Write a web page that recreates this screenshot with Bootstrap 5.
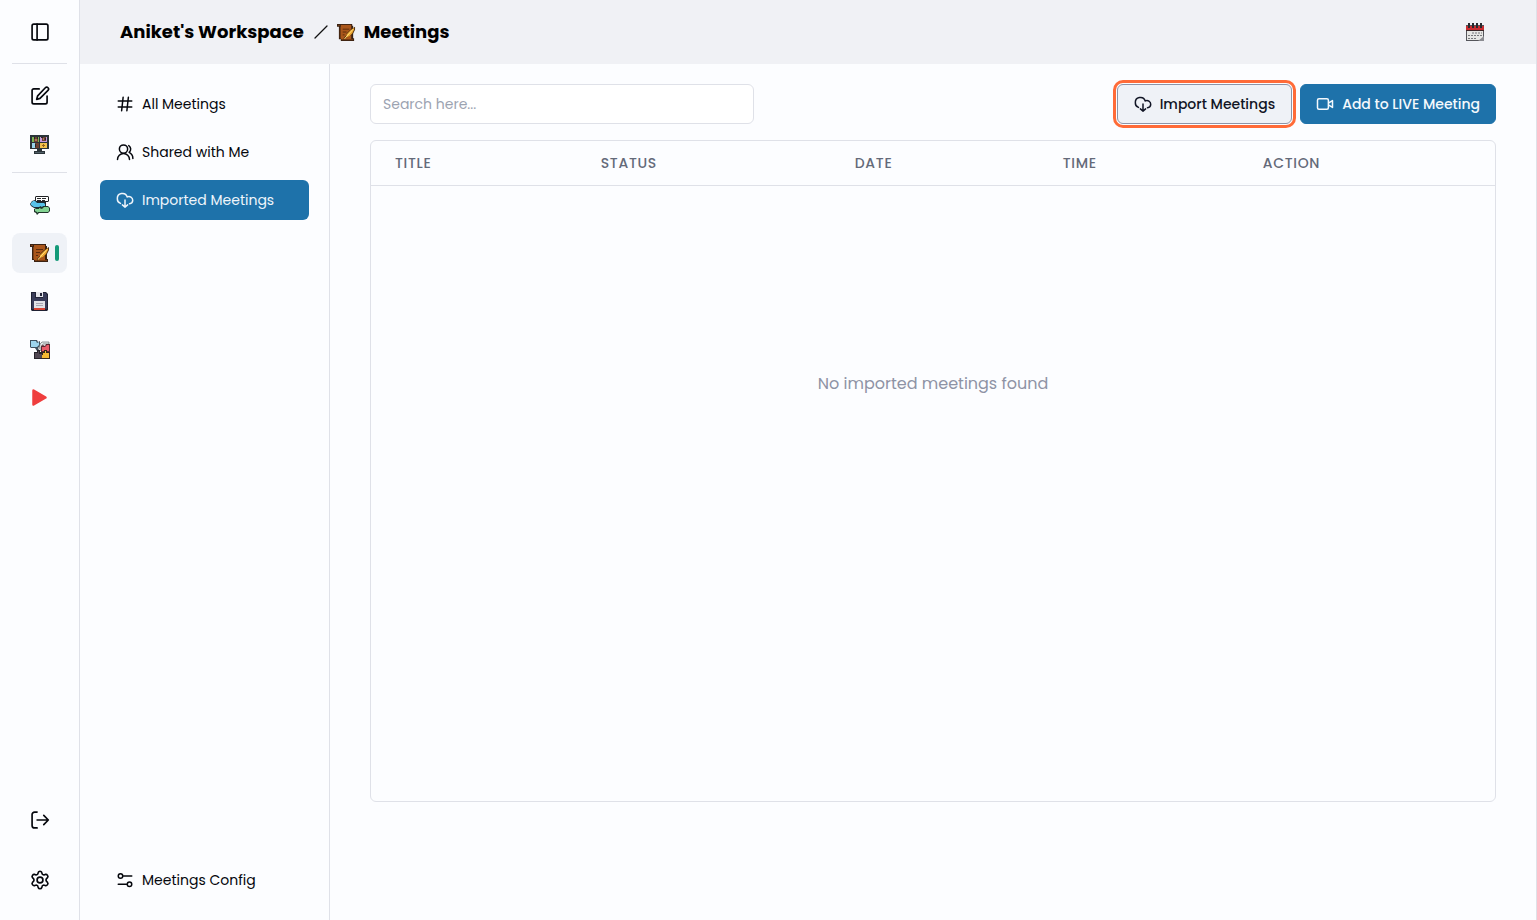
<!DOCTYPE html>
<html lang="en">
<head>
<meta charset="utf-8">
<meta name="viewport" content="width=device-width, initial-scale=1">
<title>Meetings</title>
<link href="https://cdn.jsdelivr.net/npm/bootstrap@5.3.0/dist/css/bootstrap.min.css" rel="stylesheet">
<style>
  :root { --line: #dfe1e8; --page: #fcfdff; --brand: #1e72aa; --soft: #eff2f7; }
  body { font-family: Poppins, Inter, sans-serif; font-size: 14px; line-height: 20px; background: var(--page); color: #05070d; }
  svg { flex: none; display: block; }
  .stroke { fill: none; stroke: currentColor; stroke-width: 2; stroke-linecap: round; stroke-linejoin: round; }
  .line-b { border-bottom: 1px solid var(--line); }
  .line-e { border-right: 1px solid var(--line); }
  .rail { width: 80px; flex: none; padding: 0 12px 20px; }
  .rail-top { height: 64px; padding-top: 12px; }
  .rail-tools { padding: 12px 0 8px; }
  .rail-apps { padding-top: 12px; }
  .rail-end { gap: 20px; }
  .rail-btn { width: 100%; height: 40px; padding: 0; border: 0; border-radius: 8px; background: none; color: #05070d; display: flex; align-items: center; justify-content: center; position: relative; }
  .rail-btn.current { background: var(--soft); }
  .rail-btn.current::after { content: ""; position: absolute; right: 8px; top: 12px; width: 4px; height: 16px; border-radius: 2px; background: #149a78; }
  .topbar { height: 64px; background: #f0f1f5; padding: 0 50px 0 40px; }
  .topbar h1 { font-size: 18px; line-height: 28px; font-weight: 700; color: #000; }
  .topbar .crumb-sep { margin: 0 8px 0 9px; }
  .subnav { width: 250px; flex: none; padding: 20px; }
  .side-item { height: 40px; padding: 0 16px; border-radius: 6px; color: #05070d; text-decoration: none; display: flex; align-items: center; gap: 8px; }
  .side-item.current { background: var(--brand); color: #eff5fb; }
  .content { padding: 20px 40px; }
  .search { width: 384px; height: 40px; padding: 0 12px; font-size: 14px; border-color: var(--line); border-radius: 6px; background: #fff; }
  .search::placeholder { color: #9ca3b1; }
  .act { height: 40px; padding: 0 15px; font-size: 14px; line-height: 20px; font-weight: 500; border-radius: 6px; display: flex; align-items: center; justify-content: center; gap: 8px; }
  .act-import { padding: 0 16px; background: var(--soft); border: 1px solid #8d94a8; color: #111525; outline: 3px solid #ff6b38; outline-offset: 1px; }
  .act-live { background: var(--brand); border: 1px solid var(--brand); color: #f4f9fd; }
  .panel { height: 72vh; border: 1px solid var(--line); border-radius: 6px; overflow: auto; }
  .meetings { table-layout: fixed; width: 100%; }
  .meetings th { height: 44px; padding: 0 24px; font-weight: 500; letter-spacing: .05em; color: #646a79; }
  .meetings thead { border-bottom: 1px solid var(--line); }
  .meetings td { height: 398px; text-align: center; vertical-align: middle; font-size: 16px; line-height: 24px; color: #8e93a5; }
  .w-title { width: 18.3%; } .w-status { width: 22.6%; } .w-date { width: 18.5%; } .w-time { width: 17.8%; }
</style>
</head>
<body>
<svg width="0" height="0" class="position-absolute" aria-hidden="true">
  <symbol id="scroll" viewBox="0 0 20 20">
    <path d="M0 1h16v2h1v13h1v3H4v-2H2V4H0z" fill="#3a2212"/>
    <path d="M4 2h11v15H4z" fill="#a9561b"/><path d="M1 2h2v1H1zM3 4h1v12H3z" fill="#7c4016"/>
    <path d="M5 17h12v1H5z" fill="#7c3d12"/>
    <path d="M6 6.500h7M6 9.500h4M6 12.500h2" stroke="#5b2c0d"/>
    <path d="M7 18v-2l3-3v-2l4-4 5-3v3l-2 4-4 3-3 1-2 2z" fill="#4b2d10"/>
    <path d="m8 16 2-1v-3l4-4 4-3v2l-2 4-3 3-3 1-2 2z" fill="#eda52f"/>
    <path d="m8 16.500 9-10" stroke="#ffe083"/>
  </symbol>
  <symbol id="cloud" viewBox="0 0 24 24">
    <path class="stroke" d="M6 16.500A6 6 0 0 1 1.800 10.700a6.800 6.800 0 0 1 13.200-2.800 5 5 0 0 1 7.300 4.500 4.600 4.600 0 0 1-4.300 4.500M12 12v9.500M8.500 18.500l3.500 3 3.500-3"/>
  </symbol>
</svg>

<div class="d-flex min-vh-100">
  <nav class="rail line-e d-flex flex-column" aria-label="Workspace">
    <div class="rail-top line-b">
      <button class="rail-btn" type="button" aria-label="Toggle panel"><svg class="stroke" width="20" height="20" viewBox="0 0 24 24"><rect x="2.500" y="2.500" width="19" height="19" rx="2"/><path d="M8.500 2.500v19"/></svg></button>
    </div>
    <div class="rail-tools line-b d-flex flex-column gap-2">
      <button class="rail-btn" type="button" aria-label="New note"><svg class="stroke" width="20" height="20" viewBox="0 0 24 24"><path d="M11 3.500H4.500a2 2 0 0 0-2 2v14a2 2 0 0 0 2 2h14a2 2 0 0 0 2-2V12"/><path d="M18.400 2.100a2.200 2.200 0 0 1 3.200 3.200L12 14.800 8 16l1.200-4.200z"/></svg></button>
      <button class="rail-btn" type="button" aria-label="Boardroom"><svg width="20" height="20" viewBox="0 0 20 20">
        <path d="M0 1h19v14h-7v2h3v3H4v-3h3v-2H0z" fill="#2b3439"/><path d="M5 18h9v1H5z" fill="#516068"/>
        <path d="M2 3h7v5H2z" fill="#7cb653"/><path d="M10 3h7v5h-7z" fill="#c69adb"/><path d="M2 9h7v5H2z" fill="#9bd5eb"/><path d="M10 9h7v5h-7z" fill="#f3c14b"/>
        <path d="M4 3h4v5H4zM12 3h4v4h-4zM5 9h4v5H5z" fill="#6c4132"/><path d="M4 3h1v2H4zM7 3h1v2H7zM11 3h2v1h-2zM15 4h1v2h-1zM5 10h1v3H5z" fill="#292526"/><path d="M5 5h2v2H5zM13 4h1v2h-1z" fill="#ad765b"/>
        <path d="M13 10h1v3h-1zM12 11h3v1h-3z" fill="#94641d"/></svg></button>
    </div>
    <div class="rail-apps d-flex flex-column gap-2">
      <button class="rail-btn" type="button" aria-label="Chats"><svg width="20" height="20" viewBox="0 0 20 20">
        <path d="M6 1h12l1 1v4l-1 1h-2v2H8L5 6V2z" fill="#202225"/><path d="M6 2h12v4H6z" fill="#fff"/><path d="M7 3.500h9M7 5.500h8" stroke="#292b2d" stroke-dasharray="4 1"/>
        <path d="m2 6 3-1 3 2h6l2 2v2l-2 2H4l-3-2-1-2z" fill="#1d2d35"/><path d="m1 8 2-2h2l2 2h7l1 1v2l-1 1H4l-3-2z" fill="#59c3e9"/>
        <path d="m10 11 2 1 1-1h5l2 2v3l-2 2H9l-2 2-1-2-2-1v-3l2-1h3z" fill="#20342b"/><path d="m9 13 3 1 2-2h4l1 1v3l-1 1H8l-1 1v-1l-2-1v-2h4z" fill="#83d392"/></svg></button>
      <button class="rail-btn current" type="button" aria-label="Meetings" aria-current="page"><svg width="20" height="20"><use href="#scroll"/></svg></button>
      <button class="rail-btn" type="button" aria-label="Saved"><svg width="20" height="20" viewBox="0 0 20 20">
        <path d="M1 1h15l2 2v16l-1 1H2l-1-1z" fill="#1f2133"/><path d="M2 2h14l1 2v14H2z" fill="#393c59"/>
        <path d="M5 1h8v6H5z" fill="#222438"/><path d="M6 1h7v5H6z" fill="#e5e5eb"/><path d="M10 2h2v3h-2z" fill="#222438"/>
        <path d="M4 10h11v7H4z" fill="#e1e1e6"/><path d="M6 12.500h7M6 14.500h7" stroke="#a7a7b2"/><path d="M4 17h11v2H4z" fill="#d64333"/></svg></button>
      <button class="rail-btn" type="button" aria-label="Integrations"><svg width="20" height="20" viewBox="0 0 20 20">
        <path d="M0 1h7l1 2 2-1v5l-2 2 1 3H7L5 9H1L0 8z" fill="#3d515d"/><path d="M1 2h5l1 2 2-1v3L7 8H1z" fill="#9cd5ec"/>
        <path d="m10 5 2-2h7v2h-6l-2 3v3l-2 2-2-1 2-2z" fill="#e4e8e7" stroke="#4b5557" stroke-width=".6"/>
        <path d="m11 7 2-1 2 1 1-2h4v8h-9z" fill="#5b2831"/><path d="M12 8h3l2-2h2v6h-7z" fill="#e95a69"/>
        <path d="M4 13h3v-2h3v2h2v7H4z" fill="#26232b"/><path d="M5 14h3v-2h1v3h3v4H5z" fill="#504752"/>
        <path d="M12 13h2v-2h3v2h3v7h-8z" fill="#36271b"/><path d="M13 14h2v-2h1v2h3v5h-7v-3h1z" fill="#f5b934"/></svg></button>
      <button class="rail-btn" type="button" aria-label="Play"><svg width="20" height="20" viewBox="0 0 20 20"><path d="M3.500 3.500 15.500 10.500 3.500 17.500z" fill="#ef3e3e" stroke="#ef3e3e" stroke-width="2.500" stroke-linejoin="round"/></svg></button>
    </div>
    <div class="rail-end d-flex flex-column mt-auto">
      <button class="rail-btn" type="button" aria-label="Log out"><svg class="stroke" width="20" height="20" viewBox="0 0 24 24"><path d="M8.500 2.500h-3a3 3 0 0 0-3 3v13a3 3 0 0 0 3 3h3M8.500 12H22M16.500 6.500 22 12l-5.500 5.500"/></svg></button>
      <button class="rail-btn" type="button" aria-label="Settings"><svg class="stroke" width="20" height="20" viewBox="0 0 24 24"><path d="M10 2.800c.5-1.700 3.500-1.700 4 0l.4 1.200a2.200 2.200 0 0 0 3 1.700l1.300-.4c1.700-.4 3.700 2.300 2.400 3.600l-1 1.200a2.500 2.500 0 0 0 0 3.800l1 1.200c1.300 1.300-.7 4-2.400 3.600l-1.300-.4a2.200 2.200 0 0 0-3 1.700l-.4 1.200c-.5 1.700-3.500 1.700-4 0L9.600 20a2.200 2.200 0 0 0-3-1.700l-1.300.4c-1.700.4-3.700-2.300-2.400-3.600l1-1.200a2.500 2.500 0 0 0 0-3.800l-1-1.200C1.600 7.600 3.600 4.900 5.300 5.300l1.300.4a2.200 2.200 0 0 0 3-1.700z"/><circle cx="12" cy="12" r="3.500"/></svg></button>
    </div>
  </nav>

  <div class="flex-grow-1 d-flex flex-column line-e">
    <header class="topbar d-flex align-items-center justify-content-between">
      <h1 class="d-flex align-items-center m-0">
        <span>Aniket's Workspace</span>
        <svg class="crumb-sep" width="16" height="16" viewBox="0 0 16 16"><path d="M2 14 14 2" stroke="#111" stroke-width="1.300" stroke-linecap="round"/></svg>
        <svg width="19" height="19"><use href="#scroll"/></svg>
        <span class="ms-2">Meetings</span>
      </h1>
      <button class="btn border-0 p-0" type="button" aria-label="Calendar"><svg width="22" height="22" viewBox="0 0 22 22">
        <path d="M2 4h18v16H2z" fill="#55565b"/><path d="M2 5h18v5H2z" fill="#c92c30"/><path d="M3 10h16v9H3z" fill="#e6e6e4"/>
        <path d="M4 2h2v5H4zM8 2h2v5H8zM12 2h2v5h-2zM16 2h2v5h-2z" fill="#28292d"/><path d="M2 9.500h18" stroke="#3c2527"/>
        <path d="M8 12h10M4 14.500h14M4 17.500h9" stroke="#77787c" stroke-dasharray="2 1"/><path d="m14 20 6-5v5z" fill="#8b8c91"/></svg></button>
    </header>
    <div class="d-flex flex-grow-1">
      <nav class="subnav line-e d-flex flex-column gap-2" aria-label="Meetings">
        <a class="side-item" href="#"><svg class="stroke" width="18" height="18" viewBox="0 0 24 24"><path d="M3 8h18M3 16h18M9.500 3l-2 18M16.500 3l-2 18"/></svg>All Meetings</a>
        <a class="side-item" href="#"><svg class="stroke" width="18" height="18" viewBox="0 0 24 24"><circle cx="10" cy="8" r="5.500"/><path d="M2 22a8 8 0 0 1 16 0M17 3.500a5.500 5.500 0 0 1 .5 9c3 1.500 5 4 5 8"/></svg>Shared with Me</a>
        <a class="side-item current" href="#" aria-current="page"><svg width="18" height="18"><use href="#cloud"/></svg>Imported Meetings</a>
        <a class="side-item mt-auto" href="#"><svg class="stroke" width="18" height="18" viewBox="0 0 24 24"><circle cx="6" cy="6.500" r="3"/><path d="M10 6.500h11M3 17.500h11"/><circle cx="18" cy="17.500" r="3"/></svg>Meetings Config</a>
      </nav>
      <main class="content flex-grow-1">
        <div class="d-flex align-items-center justify-content-between mb-3">
          <input class="search form-control" type="search" placeholder="Search here..." aria-label="Search meetings">
          <div class="d-flex gap-2">
            <button class="btn act act-import" type="button"><svg width="18" height="18"><use href="#cloud"/></svg>Import Meetings</button>
            <button class="btn act act-live" type="button"><svg class="stroke" width="18" height="18" viewBox="0 0 24 24"><rect x="2" y="5" width="14.500" height="14" rx="2"/><path d="m17 10.500 5-3v9l-5-3"/></svg>Add to LIVE Meeting</button>
          </div>
        </div>
        <div class="panel">
          <table class="meetings">
            <thead><tr><th class="w-title" scope="col">TITLE</th><th class="w-status" scope="col">STATUS</th><th class="w-date" scope="col">DATE</th><th class="w-time" scope="col">TIME</th><th scope="col">ACTION</th></tr></thead>
            <tbody><tr><td colspan="5">No imported meetings found</td></tr></tbody>
          </table>
        </div>
      </main>
    </div>
  </div>
</div>
<script src="https://cdn.jsdelivr.net/npm/bootstrap@5.3.0/dist/js/bootstrap.bundle.min.js"></script>
</body>
</html>
